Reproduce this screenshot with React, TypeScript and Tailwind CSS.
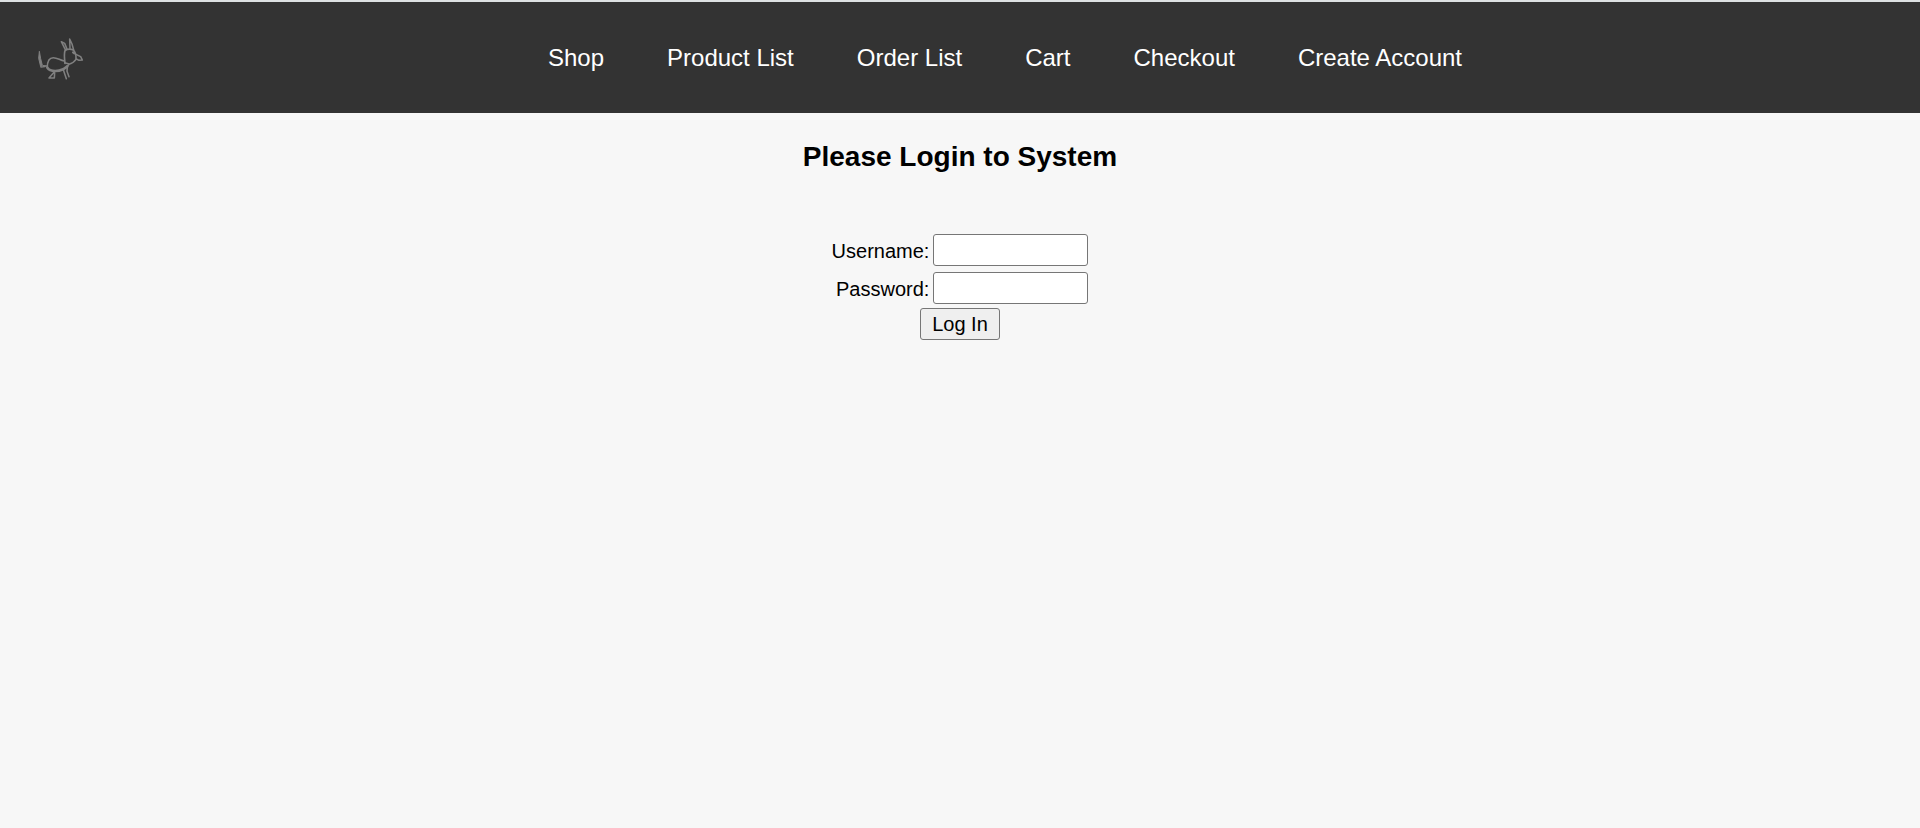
const links = ['Shop', 'Product List', 'Order List', 'Cart', 'Checkout', 'Create Account'];

function Logo() {
  return (
    <svg
      viewBox="90 81 180 183"
      className="block h-[61px] w-[60px]"
      fill="none"
      stroke="#808080"
      strokeWidth="4.6"
      strokeLinejoin="round"
      strokeLinecap="round"
      aria-hidden="true"
    >
      <path d="M118 155 L116 175 L122 200 L127 196 L122 176 Z" fill="#808080" strokeWidth="3" />
      <path d="M123 201 L135 200 M129 197 L142 198" strokeWidth="4" />
      <path d="M142 202 C142 183 148 173 160 173 C172 173 179 180 193 183" />
      <path d="M142 203 C146 210 153 213 166 213 C178 213 184 210 191 207 L202 199" strokeWidth="8" />
      <path d="M200 200 L207 193 C215 190 223 186 228 178" />
      <path d="M195 190 C193 174 192 160 195 152 C201 147 210 146 219 149" strokeWidth="5" />
      <path d="M194 188 L205 191" />
      <path d="M196 149 L184 125 L194 130 L201 147" />
      <path d="M210 145 L209 117 L216 132 L221 150" />
      <path d="M219 149 C225 155 229 164 228 177" />
      <path d="M219 157 L223 160" strokeWidth="6" />
      <path d="M228 163 L242 170 L247 180 L237 181 L229 177" />
      <path d="M162 217 L147 234 L163 234 L164 218" />
      <path d="M190 209 L199 236 M202 200 L201 214 L207 230" />
    </svg>
  );
}

const fieldClass =
  'h-8 w-[155px] rounded-[3px] border border-[#767676] bg-white px-1 text-xl text-black';

export default function App() {
  return (
    <div className="min-h-screen bg-[#f7f7f7] font-['Liberation_Sans',Arial,sans-serif] text-black">
      <header className="flex items-center border-t-2 border-[#dee1e3] bg-[#333333] px-[30px] py-[25px]">
        <a href="#home" aria-label="Home" className="mr-[30px] shrink-0">
          <Logo />
        </a>
        <nav className="flex flex-1 flex-wrap justify-center gap-x-[63px] gap-y-2 text-2xl text-white">
          {links.map((label) => (
            <a key={label} href={'#' + label.toLowerCase().replace(' ', '-')}>
              {label}
            </a>
          ))}
        </nav>
      </header>
      <main className="flex flex-col items-center pt-6">
        <h1 className="text-[28px] leading-10 font-bold">Please Login to System</h1>
        <form className="mt-[57px] flex flex-col items-center gap-1" onSubmit={(e) => e.preventDefault()}>
          <div className="grid grid-cols-[auto_auto] items-center justify-items-end gap-x-1 gap-y-[6px] text-xl">
            <label htmlFor="username" className="pt-0.5">Username:</label>
            <input id="username" type="text" className={fieldClass} />
            <label htmlFor="password" className="pt-0.5">Password:</label>
            <input id="password" type="password" className={fieldClass} />
          </div>
          <button
            type="submit"
            className="flex h-8 w-20 items-center justify-center rounded-[3px] border border-[#767676] bg-[#efefef] text-xl"
          >
            Log In
          </button>
        </form>
      </main>
    </div>
  );
}
